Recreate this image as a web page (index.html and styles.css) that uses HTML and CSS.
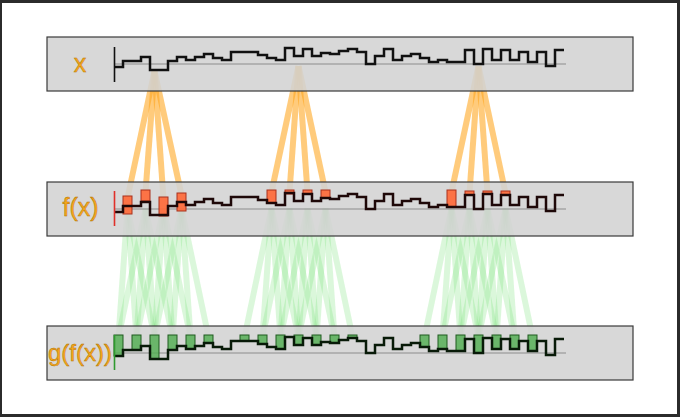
FILE: index.html
```html
<!DOCTYPE html>
<html>
<head>
<meta charset="utf-8">
<title>Dilated convolution receptive field</title>
<link rel="stylesheet" href="styles.css">
</head>
<body>
<div class="frame">
  <svg class="figure" viewBox="2 3 675 411" width="675" height="411" xmlns="http://www.w3.org/2000/svg">
    <g id="beams"></g>
    <rect class="panel" x="47" y="37" width="586" height="54"></rect>
    <rect class="panel" x="47" y="182" width="586" height="54"></rect>
    <rect class="panel" x="47" y="326" width="586" height="54"></rect>
    <line class="baseline" x1="114" y1="64" x2="566" y2="64"></line>
    <line class="baseline" x1="114" y1="209" x2="566" y2="209"></line>
    <line class="baseline" x1="114" y1="353" x2="566" y2="353"></line>
    <g id="marks"></g>
    <line class="axis axis-x" x1="114.5" y1="47" x2="114.5" y2="82"></line>
    <line class="axis axis-f" x1="114.5" y1="191" x2="114.5" y2="226"></line>
    <line class="axis axis-g" x1="114.5" y1="335" x2="114.5" y2="370"></line>
    <text class="label" x="80" y="72">x</text>
    <text class="label" x="80.5" y="216">f(x)</text>
    <text class="label label-small" x="80" y="361">g(f(x))</text>
  </svg>
</div>
<script src="script.js"></script>
</body>
</html>
```

FILE: styles.css
```css
html, body {
  margin: 0;
  padding: 0;
  background: #ffffff;
}
.frame {
  width: 680px;
  height: 417px;
  box-sizing: border-box;
  border: 3px solid #2b2b2b;
  border-left-width: 2px;
  background: #ffffff;
  display: flex;
}
.figure {
  display: block;
}
.panel {
  fill: #d3d3d3;
  fill-opacity: 0.88;
  stroke: #3a3a3a;
  stroke-width: 1.2;
}
.baseline {
  stroke: #8c8c8c;
  stroke-width: 1;
}
.axis {
  stroke-width: 1.6;
}
.axis-x { stroke: #111111; }
.axis-f { stroke: #e0302a; }
.axis-g { stroke: #2f9a2f; }
.sig {
  fill: none;
  stroke: #111111;
  stroke-width: 2.5;
  stroke-linejoin: miter;
}
.sig-f { stroke: #1e0808; }
.sig-g { stroke: #081a08; }
.beam-orange {
  stroke: #ffa51e;
  stroke-opacity: 0.58;
  stroke-width: 6;
}
.beam-green {
  stroke: #72e072;
  stroke-opacity: 0.26;
  stroke-width: 6;
}
.bar-red {
  fill: #ff6a3a;
  fill-opacity: 0.92;
  stroke: #a8301c;
  stroke-width: 1;
}
.bar-green {
  fill: #4fae4f;
  fill-opacity: 0.8;
  stroke: #1f5a1f;
  stroke-width: 1;
}
.label {
  font-family: "Liberation Sans", Arial, sans-serif;
  font-size: 25px;
  fill: #f7a81b;
  stroke: #b07000;
  stroke-width: 0.45;
  text-anchor: middle;
}
.label-small {
  font-size: 24px;
}
```

FILE: script.js
```js
(function () {
  var NS = 'http://www.w3.org/2000/svg';
  var d = [-3, 3, 3, 7, -6, -6, 3, 7, 4, 7, 10, 6, 4, 12, 12, 12, 9, 6, 4, 16,
           8, 15, 8, 11, 10, 13, 15, 12, 0, 8, 15, 4, 8, 10, 6, 2, 4, 2, 2, 14,
           0, 15, 4, 14, 4, 12, 2, 12, -2, 14];
  var X0 = 114, W = 9, N = d.length;
  var tops = [37, 182, 326];
  var beams = document.getElementById('beams');
  var marks = document.getElementById('marks');

  function el(tag, attrs, parent) {
    var e = document.createElementNS(NS, tag);
    for (var k in attrs) e.setAttribute(k, attrs[k]);
    parent.appendChild(e);
    return e;
  }
  function sy(p, i) { return tops[p] + 27 - d[i]; }
  function cx(i) { return X0 + W * i + W / 2; }

  var groups = [{ c: 4, y: 71 }, { c: 20, y: 66 }, { c: 40, y: 66 }];
  var redBars = {
    1: [196, 214], 3: [190, 201], 5: [197, 216], 7: [193, 211],
    17: [190, 203], 19: [190, 194], 21: [190, 194], 23: [190, 198],
    37: [190, 207], 39: [191, 195], 41: [191, 194], 43: [191, 195]
  };
  var offs = [-3, -1, 1, 3];
  var green = {};

  groups.forEach(function (g) {
    offs.forEach(function (o) {
      var j = g.c + o;
      el('line', { x1: cx(g.c), y1: g.y, x2: cx(j), y2: redBars[j][0] + 2, 'class': 'beam-orange' }, beams);
      offs.forEach(function (o2) {
        var k = j + o2;
        if (k < 0 || k >= N) return;
        green[k] = true;
        el('line', { x1: cx(j), y1: 208, x2: cx(k), y2: 337, 'class': 'beam-green' }, beams);
      });
    });
  });

  Object.keys(redBars).forEach(function (j) {
    var b = redBars[j];
    el('rect', { x: X0 + W * j, y: b[0], width: W, height: b[1] - b[0], 'class': 'bar-red' }, marks);
  });
  Object.keys(green).forEach(function (k) {
    k = +k;
    var bottom = sy(2, k);
    var h = Math.max(bottom - 335, 3);
    el('rect', { x: X0 + W * k, y: 335, width: W, height: h, 'class': 'bar-green' }, marks);
  });

  var cls = ['sig', 'sig sig-f', 'sig sig-g'];
  for (var p = 0; p < 3; p++) {
    var path = 'M' + X0 + ' ' + sy(p, 0);
    for (var i = 0; i < N; i++) {
      path += ' H' + (X0 + W * (i + 1));
      if (i < N - 1) path += ' V' + sy(p, i + 1);
    }
    el('path', { d: path, 'class': cls[p] }, marks);
  }
})();
```
